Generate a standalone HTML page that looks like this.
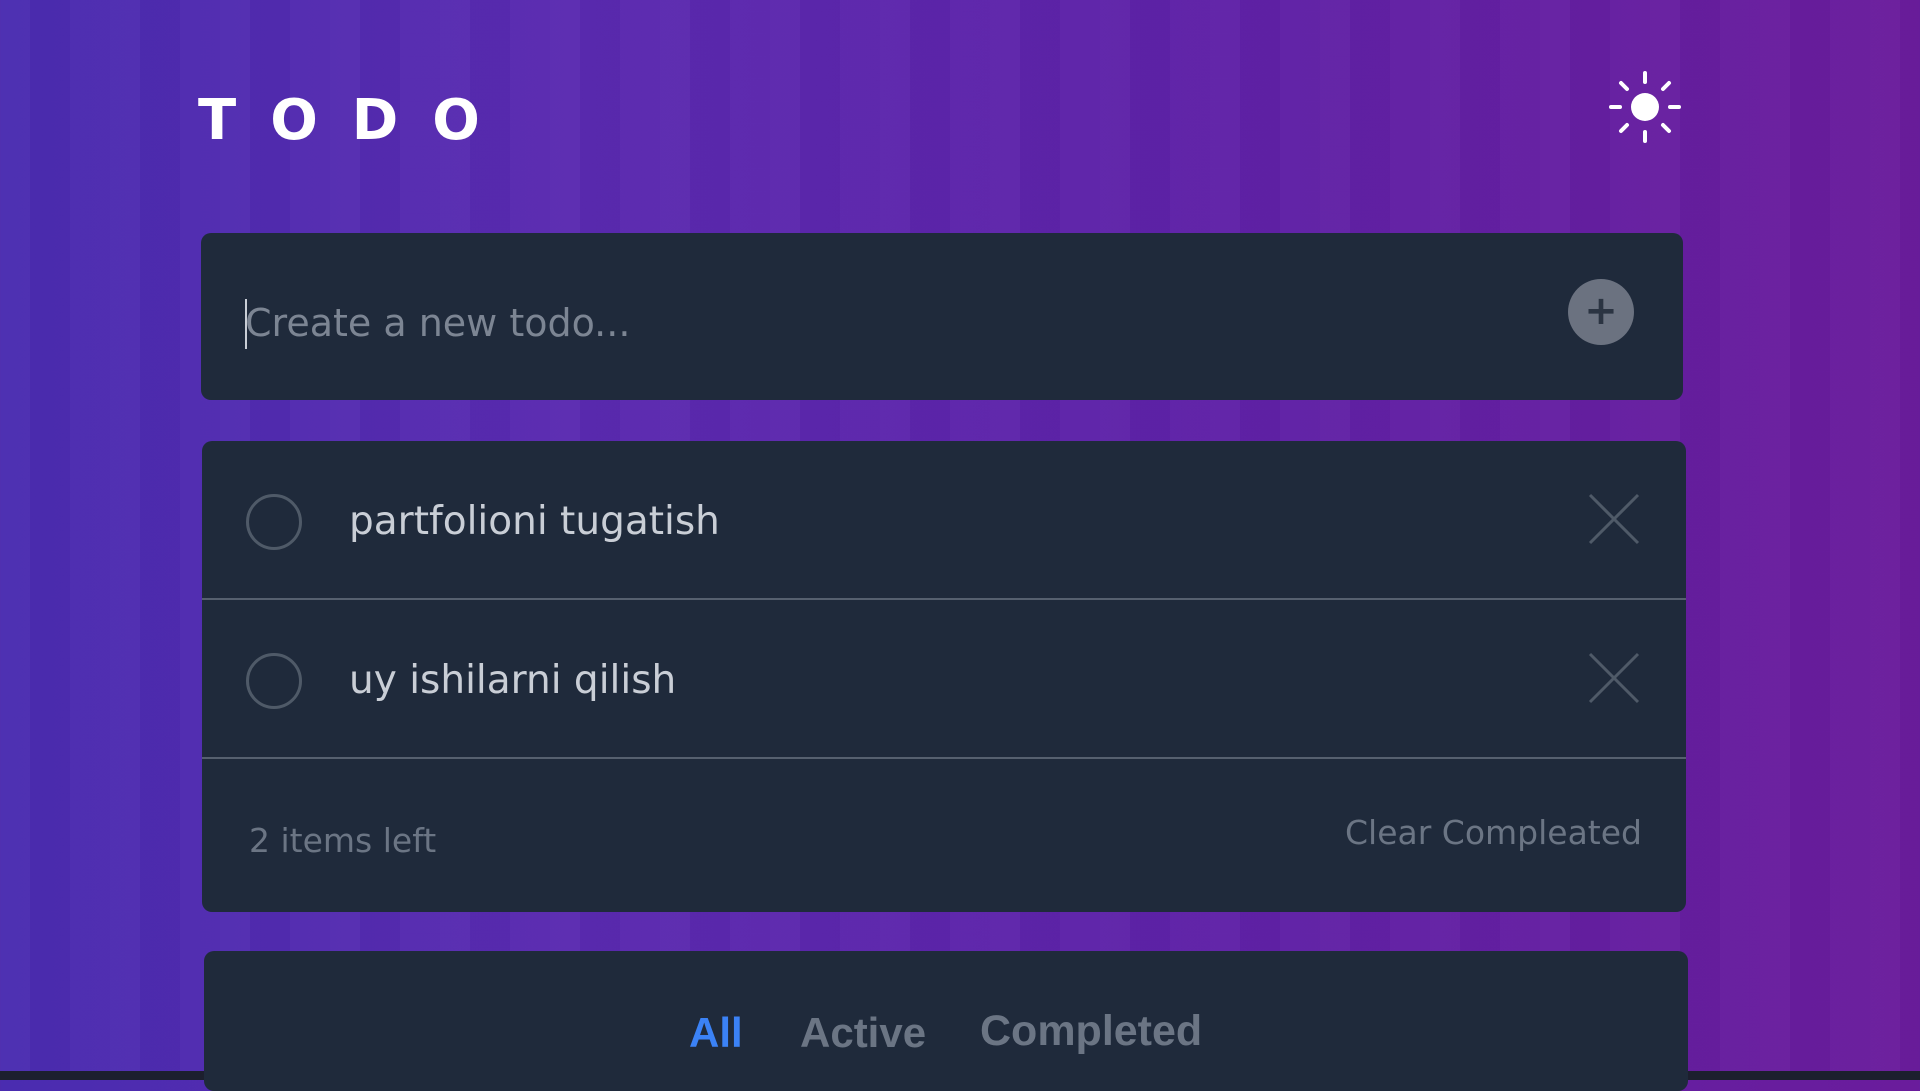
<!DOCTYPE html>
<html><head><meta charset="utf-8"><style>
*{margin:0;padding:0;box-sizing:border-box}
body{width:1920px;height:1080px;overflow:hidden;position:relative;font-family:"DejaVu Sans",sans-serif;
background:linear-gradient(90deg,#4a2cb0 0%,#5a2ab0 30%,#5e22a8 60%,#6a1c9c 100%);}
.stripes{position:absolute;inset:0;background:repeating-linear-gradient(90deg,rgba(255,255,255,0.025) 0 30px,rgba(0,0,0,0.02) 30px 70px,rgba(255,255,255,0.015) 70px 110px);}
.band{position:absolute;left:0;right:0;top:1071px;height:9px;background:#1c1f2e}
.card{position:absolute;background:#1f2a3b;border-radius:10px}
.title{position:absolute;left:198px;top:88px;color:#fff;font-weight:bold;font-size:56px;letter-spacing:34px;font-family:"DejaVu Sans",sans-serif}
.row{position:absolute;left:0;right:0;height:159px;border-bottom:2px solid #56606f}
.circ{position:absolute;width:56px;height:56px;border:3px solid #4f5a68;border-radius:50%}
.txt{position:absolute;color:#c9ced6;font-size:39px}
</style></head><body>
<div class="stripes"></div>
<div class="title">TODO</div>
<svg style="position:absolute;left:1608px;top:70px" width="74" height="74" viewBox="0 0 74 74">
<circle cx="37" cy="37" r="14" fill="#fff"/>
<g stroke="#fff" stroke-width="4" stroke-linecap="round">
<line x1="37" y1="3" x2="37" y2="12"/><line x1="37" y1="62" x2="37" y2="71"/>
<line x1="3" y1="37" x2="12" y2="37"/><line x1="62" y1="37" x2="71" y2="37"/>
<line x1="13" y1="13" x2="19" y2="19"/><line x1="55" y1="55" x2="61" y2="61"/>
<line x1="61" y1="13" x2="55" y2="19"/><line x1="13" y1="61" x2="19" y2="55"/></g></svg>
<div class="card" style="left:201px;top:233px;width:1482px;height:167px">
<div style="position:absolute;left:44px;top:66px;width:2px;height:50px;background:#c9ced6"></div>
<div style="position:absolute;left:44px;top:68px;color:#7c8593;font-size:38px">Create a new todo...</div>
<div style="position:absolute;left:1367px;top:46px;width:66px;height:66px;border-radius:50%;background:#6b7280;color:#2b3442;font-size:40px;text-align:center;line-height:64px;font-weight:bold">+</div>
</div>
<div class="band"></div>
<div class="card" style="left:202px;top:441px;width:1484px;height:471px">
<div class="row" style="top:0"><div class="circ" style="left:44px;top:53px"></div><div class="txt" style="left:147px;top:58px">partfolioni tugatish</div>
<svg style="position:absolute;left:1386px;top:52px" width="52" height="52"><g stroke="#4f5a68" stroke-width="3"><line x1="2" y1="2" x2="50" y2="50"/><line x1="50" y1="2" x2="2" y2="50"/></g></svg></div>
<div class="row" style="top:159px"><div class="circ" style="left:44px;top:53px"></div><div class="txt" style="left:147px;top:58px">uy ishilarni qilish</div>
<svg style="position:absolute;left:1386px;top:52px" width="52" height="52"><g stroke="#4f5a68" stroke-width="3"><line x1="2" y1="2" x2="50" y2="50"/><line x1="50" y1="2" x2="2" y2="50"/></g></svg></div>
<div style="position:absolute;left:47px;top:380px;color:#6b7584;font-size:33px">2 items left</div>
<div style="position:absolute;right:44px;top:372px;color:#6b7584;font-size:33px">Clear Compleated</div>
</div>
<div class="card" style="left:204px;top:951px;width:1484px;height:140px">
<div style="position:absolute;left:485px;top:58px;font-size:42px;font-weight:bold;color:#3b82f6;font-family:'Liberation Sans',sans-serif">All</div>
<div style="position:absolute;left:596px;top:58px;font-size:42px;font-weight:bold;color:#6b7584;font-family:'Liberation Sans',sans-serif">Active</div>
<div style="position:absolute;left:776px;top:56px;font-size:43px;font-weight:bold;color:#6b7584;font-family:'Liberation Sans',sans-serif">Completed</div>
</div>
</body></html>
